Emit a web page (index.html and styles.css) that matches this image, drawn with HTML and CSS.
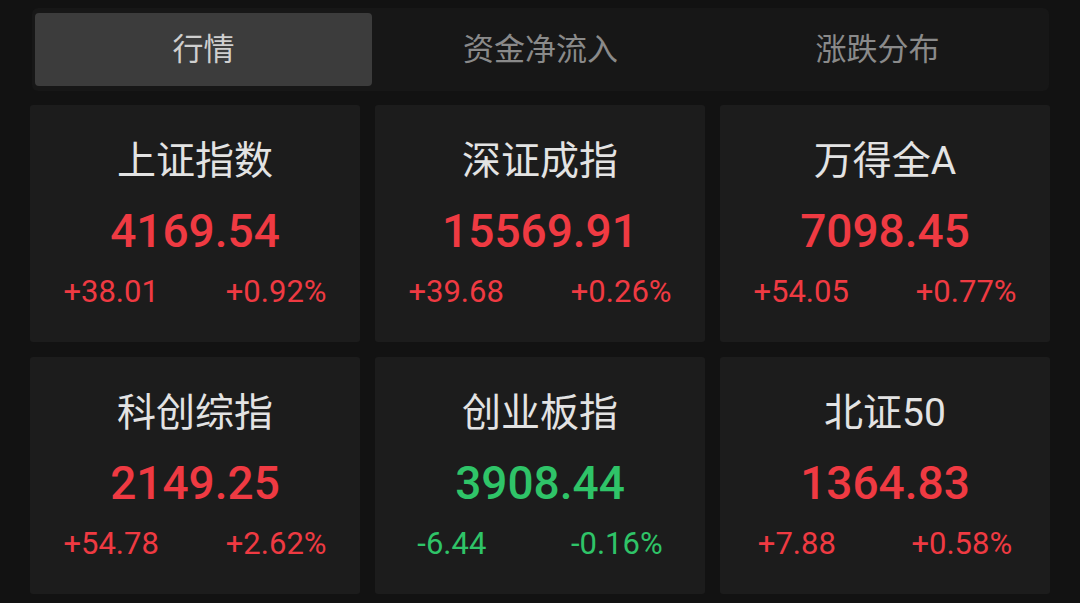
FILE: index.html
```html
<!DOCTYPE html>
<html lang="zh-CN">
<head>
<meta charset="utf-8">
<title>行情</title>
<link rel="stylesheet" href="styles.css">
</head>
<body>
<div class="page">
  <div class="tabs">
    <div class="tab active">行情</div>
    <div class="tab">资金净流入</div>
    <div class="tab">涨跌分布</div>
  </div>
  <div class="grid">
    <div class="card">
      <div class="name">上证指数</div>
      <div class="value up">4169.54</div>
      <div class="changes up"><span>+38.01</span><span>+0.92%</span></div>
    </div>
    <div class="card">
      <div class="name">深证成指</div>
      <div class="value up">15569.91</div>
      <div class="changes up"><span>+39.68</span><span>+0.26%</span></div>
    </div>
    <div class="card">
      <div class="name">万得全A</div>
      <div class="value up">7098.45</div>
      <div class="changes up"><span>+54.05</span><span>+0.77%</span></div>
    </div>
    <div class="card">
      <div class="name">科创综指</div>
      <div class="value up">2149.25</div>
      <div class="changes up"><span>+54.78</span><span>+2.62%</span></div>
    </div>
    <div class="card">
      <div class="name">创业板指</div>
      <div class="value down">3908.44</div>
      <div class="changes down"><span>-6.44</span><span>-0.16%</span></div>
    </div>
    <div class="card">
      <div class="name">北证50</div>
      <div class="value up">1364.83</div>
      <div class="changes up"><span>+7.88</span><span>+0.58%</span></div>
    </div>
  </div>
</div>
</body>
</html>
```

FILE: styles.css
```css
html, body {
  margin: 0;
  padding: 0;
  background: #121212;
}
body {
  font-family: Roboto, "Noto Sans CJK SC", sans-serif;
  width: 1080px;
  height: 603px;
  overflow: hidden;
}
.page {
  padding: 8px 30px 0 30px;
  display: flex;
  flex-direction: column;
}
.tabs {
  margin-left: 2px;
  width: 1017px;
  height: 83px;
  box-sizing: border-box;
  padding: 5px 3px;
  background: #171717;
  border-radius: 6px;
  display: flex;
}
.tab {
  flex: 1;
  display: flex;
  align-items: center;
  justify-content: center;
  padding-bottom: 6px;
  font-family: "Noto Sans CJK SC", sans-serif;
  font-size: 31px;
  color: #8a8a8a;
  border-radius: 4px;
}
.tab.active {
  background: #3c3c3c;
  color: #cfcfcf;
}
.grid {
  margin-top: 14px;
  display: grid;
  grid-template-columns: repeat(3, 330px);
  grid-auto-rows: 237px;
  column-gap: 15px;
  row-gap: 15px;
}
.card {
  background: #1c1c1c;
  border-radius: 3px;
  display: flex;
  flex-direction: column;
  align-items: center;
  padding-top: 32px;
  box-sizing: border-box;
}
.name {
  height: 48px;
  line-height: 48px;
  font-size: 39px;
  color: #e3e3e3;
}
.value {
  margin-top: 18px;
  height: 56px;
  line-height: 56px;
  font-size: 46px;
  font-weight: 500;
}
.changes {
  margin-top: 13px;
  align-self: stretch;
  display: flex;
  justify-content: space-around;
  height: 40px;
  line-height: 40px;
  font-size: 31px;
}
.up { color: #ef3a42; }
.down { color: #2fc468; }
```
